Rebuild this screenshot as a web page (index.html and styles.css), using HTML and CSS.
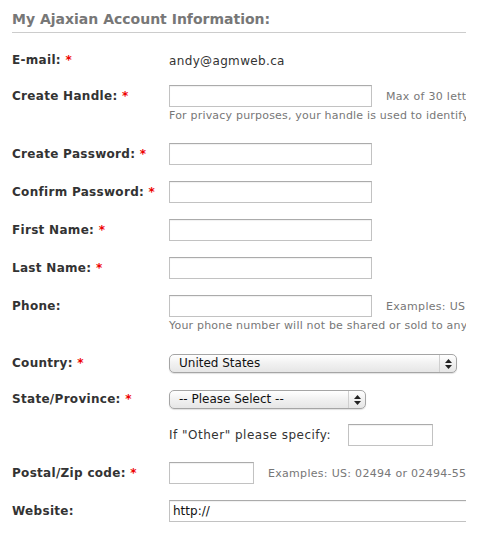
FILE: index.html
```html
<!DOCTYPE html>
<html>
<head>
<meta charset="utf-8">
<link rel="stylesheet" href="styles.css">
</head>
<body>
<div class="page">
  <h2 class="title">My Ajaxian Account Information:</h2>
  <div class="form">
    <div class="row row-text">
      <div class="label">E-mail: <span class="req">*</span></div>
      <div class="field"><span class="value">andy@agmweb.ca</span></div>
    </div>
    <div class="row">
      <div class="label">Create Handle: <span class="req">*</span></div>
      <div class="field">
        <div class="line"><span class="input w203"></span><span class="note">Max of 30 letters and numbers</span></div>
        <div class="hint">For privacy purposes, your handle is used to identify you on the site</div>
      </div>
    </div>
    <div class="row">
      <div class="label">Create Password: <span class="req">*</span></div>
      <div class="field"><span class="input w203"></span></div>
    </div>
    <div class="row">
      <div class="label">Confirm Password: <span class="req">*</span></div>
      <div class="field"><span class="input w203"></span></div>
    </div>
    <div class="row">
      <div class="label">First Name: <span class="req">*</span></div>
      <div class="field"><span class="input w203"></span></div>
    </div>
    <div class="row">
      <div class="label">Last Name: <span class="req">*</span></div>
      <div class="field"><span class="input w203"></span></div>
    </div>
    <div class="row">
      <div class="label">Phone:</div>
      <div class="field">
        <div class="line"><span class="input w203"></span><span class="note">Examples: US 555-555-5555</span></div>
        <div class="hint">Your phone number will not be shared or sold to anyone</div>
      </div>
    </div>
    <div class="row row-select">
      <div class="label">Country: <span class="req">*</span></div>
      <div class="field">
        <div class="select w288"><span class="opt">United States</span><span class="arrows"><svg width="7" height="10" viewBox="0 0 7 10"><path d="M3.5 0 L7 4 H0 Z M0 6 H7 L3.5 10 Z" fill="#222"/></svg></span></div>
      </div>
    </div>
    <div class="row row-select">
      <div class="label">State/Province: <span class="req">*</span></div>
      <div class="field">
        <div class="select w197"><span class="opt">-- Please Select --</span><span class="arrows"><svg width="7" height="10" viewBox="0 0 7 10"><path d="M3.5 0 L7 4 H0 Z M0 6 H7 L3.5 10 Z" fill="#222"/></svg></span></div>
      </div>
    </div>
    <div class="row row-other">
      <div class="label"></div>
      <div class="field">
        <div class="line"><span class="other">If "Other" please specify:</span><span class="input w85"></span></div>
      </div>
    </div>
    <div class="row">
      <div class="label">Postal/Zip code: <span class="req">*</span></div>
      <div class="field">
        <div class="line"><span class="input w85"></span><span class="note">Examples: US: 02494 or 02494-5555</span></div>
      </div>
    </div>
    <div class="row">
      <div class="label">Website:</div>
      <div class="field"><span class="input w320"><span class="intext">http://</span></span></div>
    </div>
  </div>
</div>
</body>
</html>
```
FILE: styles.css
```css
html, body {
  margin: 0;
  padding: 0;
  background: #fff;
}
.page {
  width: 454px;
  padding-left: 12px;
  overflow: hidden;
  font-family: "DejaVu Sans", Verdana, sans-serif;
}
.title {
  margin: 0;
  padding-top: 10px;
  padding-bottom: 3px;
  font-size: 14px;
  line-height: 19px;
  font-weight: bold;
  color: #777;
  border-bottom: 1px solid #ccc;
  white-space: nowrap;
}
.form {
  padding-top: 19px;
}
.row {
  display: grid;
  grid-template-columns: 157px 1fr;
  margin-bottom: 16px;
}
.row-text .label,
.row-text .field {
  line-height: 16px;
}
.label {
  font-size: 12px;
  letter-spacing: 0.3px;
  font-weight: bold;
  color: #333;
  line-height: 22px;
  white-space: nowrap;
}
.row-select .label { line-height: 20px; }
.row-other { margin-top: -1px; }
.req {
  color: #e00;
}
.field {
  min-width: 0;
  white-space: nowrap;
}
.value {
  font-size: 12px;
  letter-spacing: 0.35px;
  color: #333;
}
.line {
  display: flex;
  align-items: center;
  height: 22px;
}
.input {
  display: inline-block;
  box-sizing: border-box;
  height: 22px;
  border: 1px solid #c2c2c2;
  border-top-color: #ababab;
  box-shadow: inset 0 1px 1px rgba(0,0,0,0.06);
  background: #fff;
  flex: none;
  vertical-align: top;
}
.w203 { width: 203px; }
.w85 { width: 85px; }
.w320 { width: 320px; }
.intext {
  display: block;
  padding-left: 3px;
  line-height: 20px;
  font-size: 12px;
  color: #111;
}
.note {
  margin-left: 14px;
  font-size: 11px;
  letter-spacing: 0.3px;
  color: #777;
}
.hint {
  margin-top: 1px;
  margin-bottom: 3px;
  font-size: 11px;
  letter-spacing: 0.2px;
  line-height: 16px;
  color: #777;
}
.other {
  font-size: 12px;
  letter-spacing: 0.5px;
  color: #333;
  margin-right: 17px;
}
.select {
  display: flex;
  align-items: stretch;
  box-sizing: border-box;
  height: 19px;
  margin-top: 1px;
  border: 1px solid #a5a5a5;
  border-radius: 5px;
  background: linear-gradient(#ffffff, #f1f1f1 50%, #e6e6e6);
  box-shadow: 0 1px 1px rgba(0,0,0,0.12);
}
.w288 { width: 288px; }
.w197 { width: 197px; }
.opt {
  flex: 1;
  padding-left: 9px;
  font-size: 12px;
  line-height: 17px;
  color: #111;
}
.arrows {
  width: 16px;
  border-left: 1px solid #cfcfcf;
  display: flex;
  align-items: center;
  justify-content: center;
}
```
